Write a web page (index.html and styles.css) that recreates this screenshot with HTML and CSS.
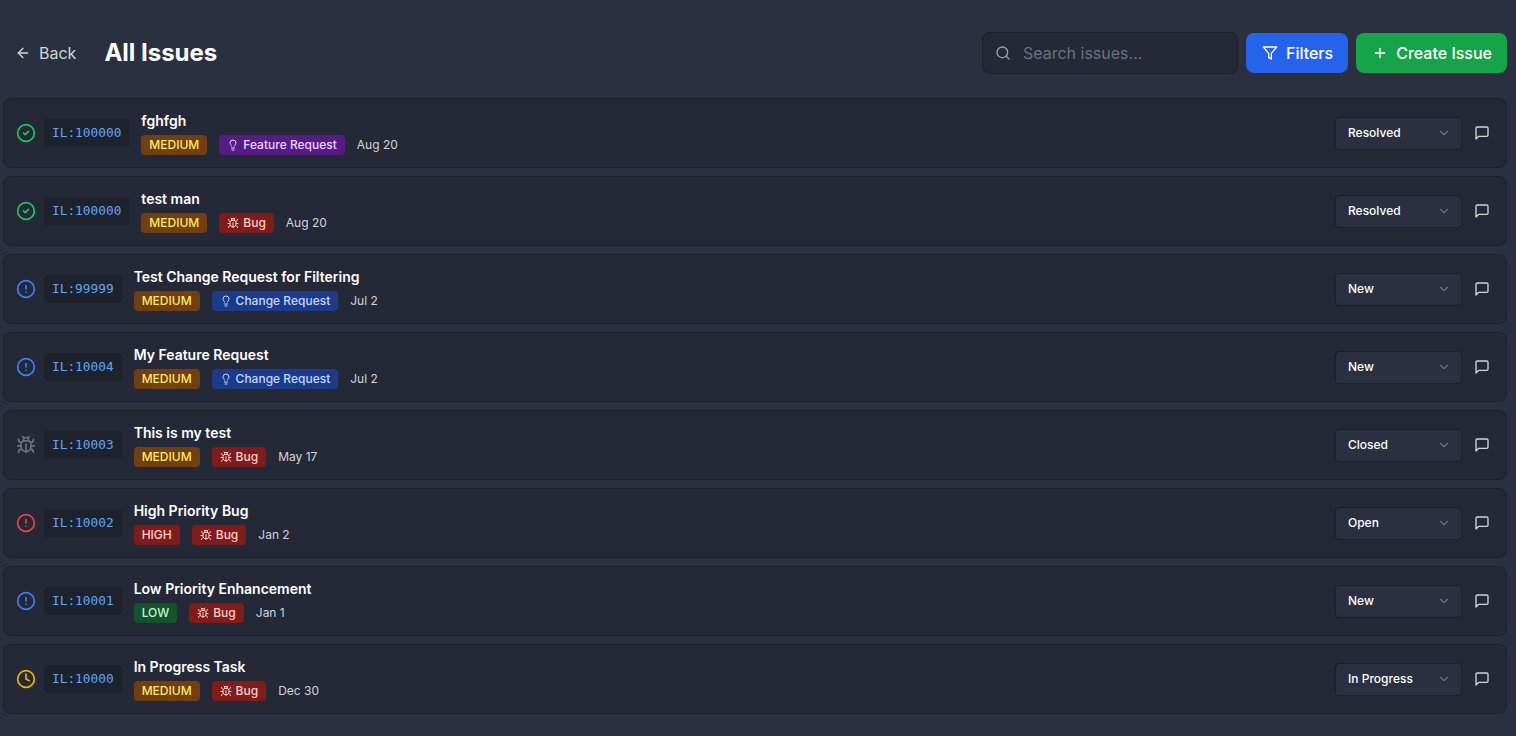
FILE: index.html
```html
<!DOCTYPE html>
<html lang="en">
<head>
<meta charset="utf-8">
<title>All Issues</title>
<link rel="stylesheet" href="styles.css">
</head>
<body>
<svg class="defs" width="0" height="0" aria-hidden="true">
  <symbol id="i-bug" viewBox="0 0 24 24"><path d="m8 2 1.88 1.88"/><path d="M14.12 3.88 16 2"/><path d="M9 7.13v-1a3.003 3.003 0 1 1 6 0v1"/><path d="M12 20c-3.3 0-6-2.7-6-6v-3a4 4 0 0 1 4-4h4a4 4 0 0 1 4 4v3c0 3.3-2.7 6-6 6"/><path d="M12 20v-9"/><path d="M6.53 9C4.6 8.8 3 7.1 3 5"/><path d="M6 13H2"/><path d="M3 21c0-2.1 1.7-3.9 3.8-4"/><path d="M20.97 5c0 2.1-1.6 3.8-3.5 4"/><path d="M22 13h-4"/><path d="M17.2 17c2.1.1 3.8 1.9 3.8 4"/></symbol>
  <symbol id="i-bulb" viewBox="0 0 24 24"><path d="M15 14c.2-1 .7-1.7 1.5-2.5 1-.9 1.5-2.2 1.5-3.5A6 6 0 0 0 6 8c0 1 .2 2.2 1.5 3.5.7.7 1.3 1.5 1.500 2.500"/><path d="M9 18h6"/><path d="M10 22h4"/></symbol>
  <symbol id="i-check" viewBox="0 0 24 24"><circle cx="12" cy="12" r="10"/><path d="m9 12 2 2 4-4"/></symbol>
  <symbol id="i-alert" viewBox="0 0 24 24"><circle cx="12" cy="12" r="10"/><line x1="12" x2="12" y1="8" y2="12"/><line x1="12" x2="12.01" y1="16" y2="16"/></symbol>
  <symbol id="i-clock" viewBox="0 0 24 24"><circle cx="12" cy="12" r="10"/><polyline points="12 6 12 12 16 14"/></symbol>
  <symbol id="i-chev" viewBox="0 0 24 24"><path d="m6 9 6 6 6-6"/></symbol>
  <symbol id="i-msg" viewBox="0 0 24 24"><path d="M21 15a2 2 0 0 1-2 2H7l-4 4V5a2 2 0 0 1 2-2h14a2 2 0 0 1 2 2z"/></symbol>
</svg>
<div class="page">
  <header class="header">
    <div class="header-left">
      <a class="back">
        <svg class="icon i16" viewBox="0 0 24 24"><path d="m12 19-7-7 7-7"/><path d="M19 12H5"/></svg>
        <span>Back</span>
      </a>
      <h1 class="title">All Issues</h1>
    </div>
    <div class="header-right">
      <div class="search">
        <svg class="icon i16 search-icon" viewBox="0 0 24 24"><circle cx="11" cy="11" r="8"/><path d="m21 21-4.300-4.300"/></svg>
        <span class="placeholder">Search issues...</span>
      </div>
      <button class="btn btn-blue">
        <svg class="icon i16" viewBox="0 0 24 24"><polygon points="22 3 2 3 10 12.460 10 19 14 21 14 12.460 22 3"/></svg>
        Filters
      </button>
      <button class="btn btn-green">
        <svg class="icon i16" viewBox="0 0 24 24"><path d="M5 12h14"/><path d="M12 5v14"/></svg>
        Create Issue
      </button>
    </div>
  </header>

  <main class="list">
    <article class="card">
      <svg class="icon status s-green"><use href="#i-check"/></svg>
      <code class="id">IL:100000</code>
      <div class="body">
        <div class="name">fghfgh</div>
        <div class="meta">
          <span class="tag t-medium">MEDIUM</span>
          <span class="tag t-feature"><svg class="icon i12"><use href="#i-bulb"/></svg>Feature Request</span>
          <span class="date">Aug 20</span>
        </div>
      </div>
      <div class="select"><span>Resolved</span><svg class="icon i14"><use href="#i-chev"/></svg></div>
      <svg class="icon i16 msg"><use href="#i-msg"/></svg>
    </article>
    <article class="card">
      <svg class="icon status s-green"><use href="#i-check"/></svg>
      <code class="id">IL:100000</code>
      <div class="body">
        <div class="name">test man</div>
        <div class="meta">
          <span class="tag t-medium">MEDIUM</span>
          <span class="tag t-bug"><svg class="icon i12"><use href="#i-bug"/></svg>Bug</span>
          <span class="date">Aug 20</span>
        </div>
      </div>
      <div class="select"><span>Resolved</span><svg class="icon i14"><use href="#i-chev"/></svg></div>
      <svg class="icon i16 msg"><use href="#i-msg"/></svg>
    </article>
    <article class="card">
      <svg class="icon status s-blue"><use href="#i-alert"/></svg>
      <code class="id">IL:99999</code>
      <div class="body">
        <div class="name">Test Change Request for Filtering</div>
        <div class="meta">
          <span class="tag t-medium">MEDIUM</span>
          <span class="tag t-change"><svg class="icon i12"><use href="#i-bulb"/></svg>Change Request</span>
          <span class="date">Jul 2</span>
        </div>
      </div>
      <div class="select"><span>New</span><svg class="icon i14"><use href="#i-chev"/></svg></div>
      <svg class="icon i16 msg"><use href="#i-msg"/></svg>
    </article>
    <article class="card">
      <svg class="icon status s-blue"><use href="#i-alert"/></svg>
      <code class="id">IL:10004</code>
      <div class="body">
        <div class="name">My Feature Request</div>
        <div class="meta">
          <span class="tag t-medium">MEDIUM</span>
          <span class="tag t-change"><svg class="icon i12"><use href="#i-bulb"/></svg>Change Request</span>
          <span class="date">Jul 2</span>
        </div>
      </div>
      <div class="select"><span>New</span><svg class="icon i14"><use href="#i-chev"/></svg></div>
      <svg class="icon i16 msg"><use href="#i-msg"/></svg>
    </article>
    <article class="card">
      <svg class="icon status s-gray"><use href="#i-bug"/></svg>
      <code class="id">IL:10003</code>
      <div class="body">
        <div class="name">This is my test</div>
        <div class="meta">
          <span class="tag t-medium">MEDIUM</span>
          <span class="tag t-bug"><svg class="icon i12"><use href="#i-bug"/></svg>Bug</span>
          <span class="date">May 17</span>
        </div>
      </div>
      <div class="select"><span>Closed</span><svg class="icon i14"><use href="#i-chev"/></svg></div>
      <svg class="icon i16 msg"><use href="#i-msg"/></svg>
    </article>
    <article class="card">
      <svg class="icon status s-red"><use href="#i-alert"/></svg>
      <code class="id">IL:10002</code>
      <div class="body">
        <div class="name">High Priority Bug</div>
        <div class="meta">
          <span class="tag t-high">HIGH</span>
          <span class="tag t-bug"><svg class="icon i12"><use href="#i-bug"/></svg>Bug</span>
          <span class="date">Jan 2</span>
        </div>
      </div>
      <div class="select"><span>Open</span><svg class="icon i14"><use href="#i-chev"/></svg></div>
      <svg class="icon i16 msg"><use href="#i-msg"/></svg>
    </article>
    <article class="card">
      <svg class="icon status s-blue"><use href="#i-alert"/></svg>
      <code class="id">IL:10001</code>
      <div class="body">
        <div class="name">Low Priority Enhancement</div>
        <div class="meta">
          <span class="tag t-low">LOW</span>
          <span class="tag t-bug"><svg class="icon i12"><use href="#i-bug"/></svg>Bug</span>
          <span class="date">Jan 1</span>
        </div>
      </div>
      <div class="select"><span>New</span><svg class="icon i14"><use href="#i-chev"/></svg></div>
      <svg class="icon i16 msg"><use href="#i-msg"/></svg>
    </article>
    <article class="card">
      <svg class="icon status s-yellow"><use href="#i-clock"/></svg>
      <code class="id">IL:10000</code>
      <div class="body">
        <div class="name">In Progress Task</div>
        <div class="meta">
          <span class="tag t-medium">MEDIUM</span>
          <span class="tag t-bug"><svg class="icon i12"><use href="#i-bug"/></svg>Bug</span>
          <span class="date">Dec 30</span>
        </div>
      </div>
      <div class="select"><span>In Progress</span><svg class="icon i14"><use href="#i-chev"/></svg></div>
      <svg class="icon i16 msg"><use href="#i-msg"/></svg>
    </article>
  </main>
</div>
</body>
</html>
```

FILE: styles.css
```css
* { box-sizing: border-box; }
html, body { margin: 0; height: 100%; }
body {
  background: #2a3040;
  color: #fff;
  font-family: Inter, "Liberation Sans", sans-serif;
  overflow: hidden;
}
.defs { position: absolute; }
.icon {
  fill: none;
  stroke: currentColor;
  stroke-width: 2;
  stroke-linecap: round;
  stroke-linejoin: round;
  flex: none;
}
.i12 { width: 12px; height: 12px; }
.i14 { width: 14px; height: 14px; }
.i16 { width: 16px; height: 16px; }
.page { padding: 32px 9px 0 3px; }

.header {
  display: flex;
  align-items: center;
  justify-content: space-between;
  height: 42px;
  margin-bottom: 24px;
}
.header-left { display: flex; align-items: center; gap: 28px; padding-left: 12px; }
.back { display: flex; align-items: center; gap: 8px; color: #d1d5db; font-size: 16px; line-height: 24px; }
.title { margin: 0; font-size: 24px; line-height: 32px; font-weight: 700; }
.header-right { display: flex; align-items: center; gap: 8px; }
.search {
  display: flex;
  align-items: center;
  gap: 12px;
  width: 256px;
  height: 42px;
  padding-left: 12px;
  background: #252836;
  border: 1px solid #1c1f2a;
  border-radius: 8px;
}
.search-icon { color: #9ca3af; }
.placeholder { color: #6b7280; font-size: 16px; }
.btn {
  display: flex;
  align-items: center;
  gap: 8px;
  height: 40px;
  padding: 0 15px 0 16px;
  border: 0;
  border-radius: 8px;
  color: #fff;
  font: 500 16px/24px Inter, "Liberation Sans", sans-serif;
}
.btn-blue { background: #2563eb; }
.btn-green { background: #16a34a; }

.list { display: flex; flex-direction: column; gap: 8px; }
.card {
  display: flex;
  align-items: center;
  height: 70px;
  padding: 0 16px 0 12px;
  background: #252836;
  border: 1px solid #1c1f2a;
  border-radius: 8px;
}
.status { width: 20px; height: 20px; margin-right: 8px; }
.s-green { color: #22c55e; }
.s-blue { color: #3b82f6; }
.s-gray { color: #6b7280; }
.s-red { color: #ef4444; }
.s-yellow { color: #eab308; }
.id {
  padding: 0 8px;
  height: 28px;
  line-height: 28px;
  margin-right: 12px;
  background: #1e222d;
  border-radius: 4px;
  color: #60a5fa;
  font-family: "DejaVu Sans Mono", monospace;
  font-size: 12.8px;
}
.body { flex: 1; min-width: 0; display: flex; flex-direction: column; gap: 4px; }
.name { font-size: 14px; line-height: 20px; font-weight: 600; }
.meta { display: flex; align-items: center; gap: 12px; }
.tag {
  display: flex;
  align-items: center;
  gap: 4px;
  height: 20px;
  padding: 0 8px;
  border-radius: 4px;
  font-size: 12px;
  line-height: 16px;
  font-weight: 500;
}
.t-medium { background: #713f12; color: #fde968; }
.t-high { background: #7f1d1d; color: #fecaca; }
.t-low { background: #14532d; color: #bbf7d0; }
.t-bug { background: #7f1d1d; color: #fecaca; }
.t-feature { background: #581c87; color: #e9d5ff; }
.t-change { background: #1e3a8a; color: #bfdbfe; }
.date { color: #d1d5db; font-size: 12px; line-height: 16px; }
.select {
  display: flex;
  align-items: center;
  justify-content: space-between;
  width: 127px;
  height: 33px;
  padding: 0 10px 1px 12px;
  background: #2a3040;
  border: 1px solid #1c1f2a;
  border-radius: 4px;
  font-size: 12px;
  font-weight: 500;
  color: #fff;
}
.select .icon { color: #6b7280; }
.msg { margin-left: 12px; color: #d1d5db; }
```
